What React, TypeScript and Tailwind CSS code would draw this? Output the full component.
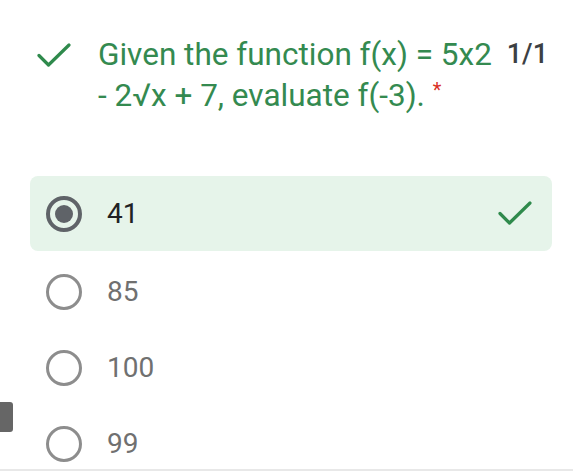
import { ReactNode } from 'react';

function Check({ className }: { className?: string }) {
  return (
    <svg viewBox="0 0 34 25" className={className} fill="none">
      <path d="M2 12.5 L11.5 22 L32 2" stroke="#2f8a4c" strokeWidth="3.2" strokeLinecap="round" strokeLinejoin="round" />
    </svg>
  );
}

function Radio({ checked }: { checked?: boolean }) {
  if (checked) {
    return (
      <div className="w-[36px] h-[36px] rounded-full border-[4px] border-[#5f6368] flex items-center justify-center shrink-0">
        <div className="w-[18px] h-[18px] rounded-full bg-[#5f6368]" />
      </div>
    );
  }
  return <div className="w-[36px] h-[36px] rounded-full border-[3px] border-[#8d8d8d] shrink-0" />;
}

function Option({ label, children }: { label: string; children?: ReactNode }) {
  return (
    <div className="h-[76px] flex items-center pl-[16px]">
      <Radio />
      <span className="ml-[25px] text-[28px] text-[#707070]">{label}</span>
      {children}
    </div>
  );
}

export default function App() {
  return (
    <div className="w-[573px] h-[471px] bg-white relative overflow-hidden font-['Roboto',sans-serif]">
      <div className="flex pt-[34px] pl-[37px] pr-[25px]">
        <Check className="w-[34px] h-[25px] mt-[9px] shrink-0" />
        <div className="ml-[27px] text-[31.5px] leading-[41px] text-[#348a50] whitespace-nowrap">
          <div>Given the function f(x) = 5x2</div>
          <div>
            - 2√x + 7, evaluate f(-3).{' '}
            <span className="text-[#d93025] text-[20px] align-top leading-[30px]">*</span>
          </div>
        </div>
        <div className="ml-auto text-[27px] leading-[41px] font-medium text-[#3c4043]">1/1</div>
      </div>

      <div className="mt-[60px] pl-[30px] pr-[21px]">
        <div className="h-[75px] rounded-lg bg-[#e6f4ea] flex items-center pl-[16px] pr-[20px]">
          <Radio checked />
          <span className="ml-[25px] text-[28px] text-[#202124]">41</span>
          <Check className="w-[34px] h-[25px] ml-auto" />
        </div>
        <div className="pt-[3px]">
          <Option label="85" />
          <Option label="100" />
          <Option label="99" />
        </div>
      </div>

      <div className="absolute left-0 top-[402px] w-[13px] h-[30px] rounded-r-[3px] bg-[#666666]" />
      <div className="absolute left-0 right-0 bottom-0 h-[2px] bg-[#e8e8e8]" />
    </div>
  );
}
